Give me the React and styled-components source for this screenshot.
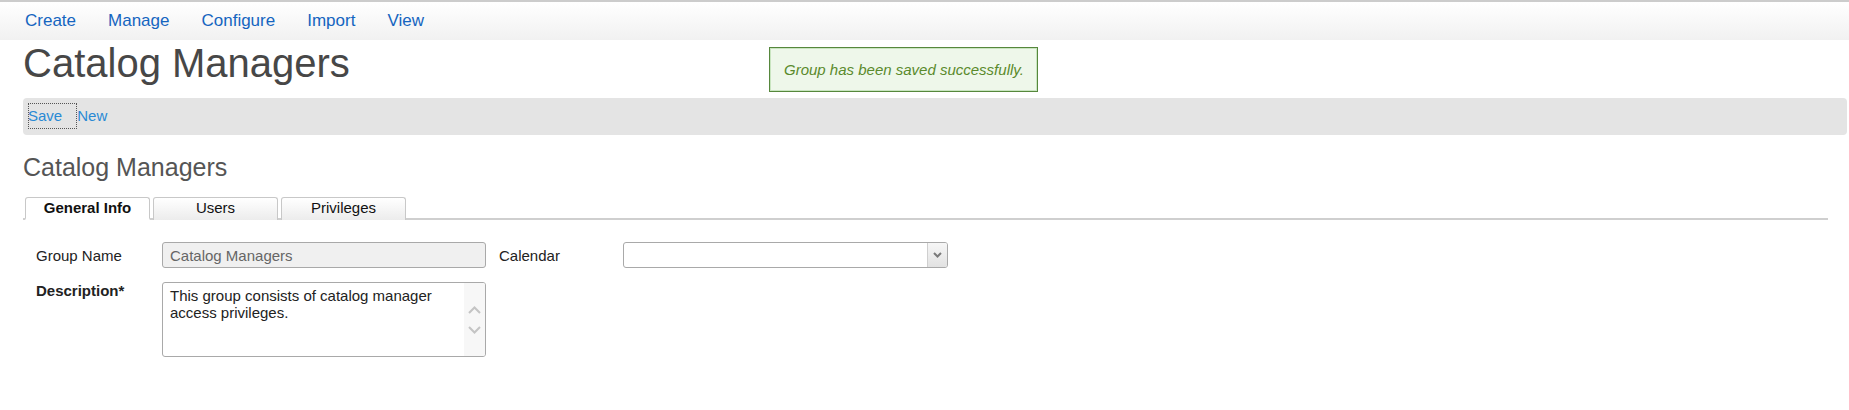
import React from "react";
import styled, { createGlobalStyle } from "styled-components";

const GlobalStyle = createGlobalStyle`
  html, body {
    margin: 0;
    padding: 0;
    background: #fff;
    font-family: "Liberation Sans", Arial, sans-serif;
    font-size: 15px;
    color: #222;
  }
`;

const TopNav = styled.nav`
  display: flex;
  align-items: center;
  gap: 32px;
  height: 38px;
  padding-left: 25px;
  border-top: 2px solid #cccccc;
  background: linear-gradient(#ffffff, #f1f1f1);

  a {
    font-size: 17px;
    color: #1565c0;
    text-decoration: none;
  }
`;

const Page = styled.div`
  padding: 0 2px 0 23px;
`;

const Header = styled.div`
  position: relative;
  height: 46px;
`;

const Title = styled.h1`
  margin: 0;
  font-size: 40px;
  line-height: 46px;
  font-weight: normal;
  color: #474747;
`;

const Toast = styled.div`
  position: absolute;
  left: 746px;
  top: 7px;
  box-sizing: border-box;
  width: 269px;
  height: 45px;
  display: flex;
  align-items: center;
  padding-left: 14px;
  border: 1px solid #56873c;
  box-shadow: inset 0 0 0 1px #c9e5c0;
  background: #eef7ea;
  color: #5a8a2c;
  font-style: italic;
  white-space: nowrap;
`;

const Toolbar = styled.div`
  display: flex;
  margin-top: 12px;
  height: 37px;
  box-sizing: border-box;
  padding: 5px 0 0 5px;
  border-radius: 4px;
  background: #e4e4e4;
`;

const ToolLink = styled.a`
  display: inline-block;
  box-sizing: border-box;
  height: 26px;
  line-height: 26px;
  padding-right: ${(p) => (p.$focused ? "15px" : "0")};
  outline: ${(p) => (p.$focused ? "1px dotted #555" : "none")};
  outline-offset: -1px;
  color: #2a8ad4;
  text-decoration: none;
`;

const SubTitle = styled.h2`
  margin: 18px 0 0;
  font-size: 25px;
  line-height: 29px;
  font-weight: normal;
  color: #555;
`;

const Tabs = styled.div`
  display: flex;
  gap: 3px;
  margin: 15px 19px 0 0;
  padding-left: 2px;
  border-bottom: 2px solid #cfcfcf;
`;

const Tab = styled.div`
  box-sizing: border-box;
  width: 125px;
  height: 23px;
  margin-bottom: -2px;
  border: 1px solid #c8c8c8;
  border-bottom: ${(p) => (p.$active ? "2px solid #fff" : "none")};
  border-radius: 3px 3px 0 0;
  background: ${(p) => (p.$active ? "#fff" : "linear-gradient(#ffffff, #ececec)")};
  text-align: center;
  line-height: 20px;
  font-weight: ${(p) => (p.$active ? "bold" : "normal")};
  color: #111;
`;

const Form = styled.div`
  display: grid;
  grid-template-columns: 126px 324px 137px 325px;
  row-gap: 14px;
  margin-top: 22px;
  padding-left: 13px;
`;

const Label = styled.div`
  align-self: ${(p) => (p.$top ? "start" : "center")};
  padding-left: ${(p) => p.$indent || 0}px;
  line-height: 17px;
  font-weight: ${(p) => (p.$bold ? "bold" : "normal")};
`;

const TextBox = styled.div`
  box-sizing: border-box;
  height: 26px;
  display: flex;
  align-items: center;
  padding-left: 7px;
  border: 1px solid #a9a9a9;
  border-radius: 3px;
  background: #f0f0f0;
  color: #666;
`;

const Select = styled.div`
  box-sizing: border-box;
  height: 26px;
  display: flex;
  justify-content: flex-end;
  border: 1px solid #a9a9a9;
  border-radius: 3px;
  background: #fff;
  overflow: hidden;
`;

const SelectArrow = styled.div`
  width: 19px;
  display: flex;
  align-items: center;
  justify-content: center;
  border-left: 1px solid #cfcfcf;
  background: linear-gradient(#f6f6f6, #e2e2e2);
`;

const TextArea = styled.div`
  box-sizing: border-box;
  height: 75px;
  display: flex;
  border: 1px solid #a9a9a9;
  border-radius: 3px;
  background: #fff;
  overflow: hidden;
`;

const TextAreaBody = styled.div`
  flex: 1;
  padding: 4px 0 0 7px;
  line-height: 17px;
  color: #222;
`;

const ScrollTrack = styled.div`
  width: 21px;
  display: flex;
  flex-direction: column;
  align-items: center;
  justify-content: center;
  gap: 12px;
  background: #f7f7f7;
`;

const Chevron = ({ up }) => (
  <svg width="13" height="8" viewBox="0 0 13 8">
    <path
      d={up ? "M1 7 L6.5 1.5 L12 7" : "M1 1 L6.5 6.5 L12 1"}
      fill="none"
      stroke="#c4c4c4"
      strokeWidth="2"
    />
  </svg>
);

const App = () => {
  return (
    <>
      <GlobalStyle />
      <TopNav>
        <a href="#">Create</a>
        <a href="#">Manage</a>
        <a href="#">Configure</a>
        <a href="#">Import</a>
        <a href="#">View</a>
      </TopNav>
      <Page>
        <Header>
          <Title>Catalog Managers</Title>
          <Toast>Group has been saved successfully.</Toast>
        </Header>
        <Toolbar>
          <ToolLink href="#" $focused>Save</ToolLink>
          <ToolLink href="#">New</ToolLink>
        </Toolbar>
        <SubTitle>Catalog Managers</SubTitle>
        <Tabs>
          <Tab $active>General Info</Tab>
          <Tab>Users</Tab>
          <Tab>Privileges</Tab>
        </Tabs>
        <Form>
          <Label>Group Name</Label>
          <TextBox>Catalog Managers</TextBox>
          <Label $indent={13}>Calendar</Label>
          <Select>
            <SelectArrow>
              <svg width="9" height="6" viewBox="0 0 9 6">
                <path d="M1 1 L4.5 4.5 L8 1" fill="none" stroke="#7a7a7a" strokeWidth="2" />
              </svg>
            </SelectArrow>
          </Select>
          <Label $top $bold>Description*</Label>
          <TextArea>
            <TextAreaBody>
              This group consists of catalog manager
              <br />
              access privileges.
            </TextAreaBody>
            <ScrollTrack>
              <Chevron up />
              <Chevron />
            </ScrollTrack>
          </TextArea>
        </Form>
      </Page>
    </>
  );
};

export default App;
